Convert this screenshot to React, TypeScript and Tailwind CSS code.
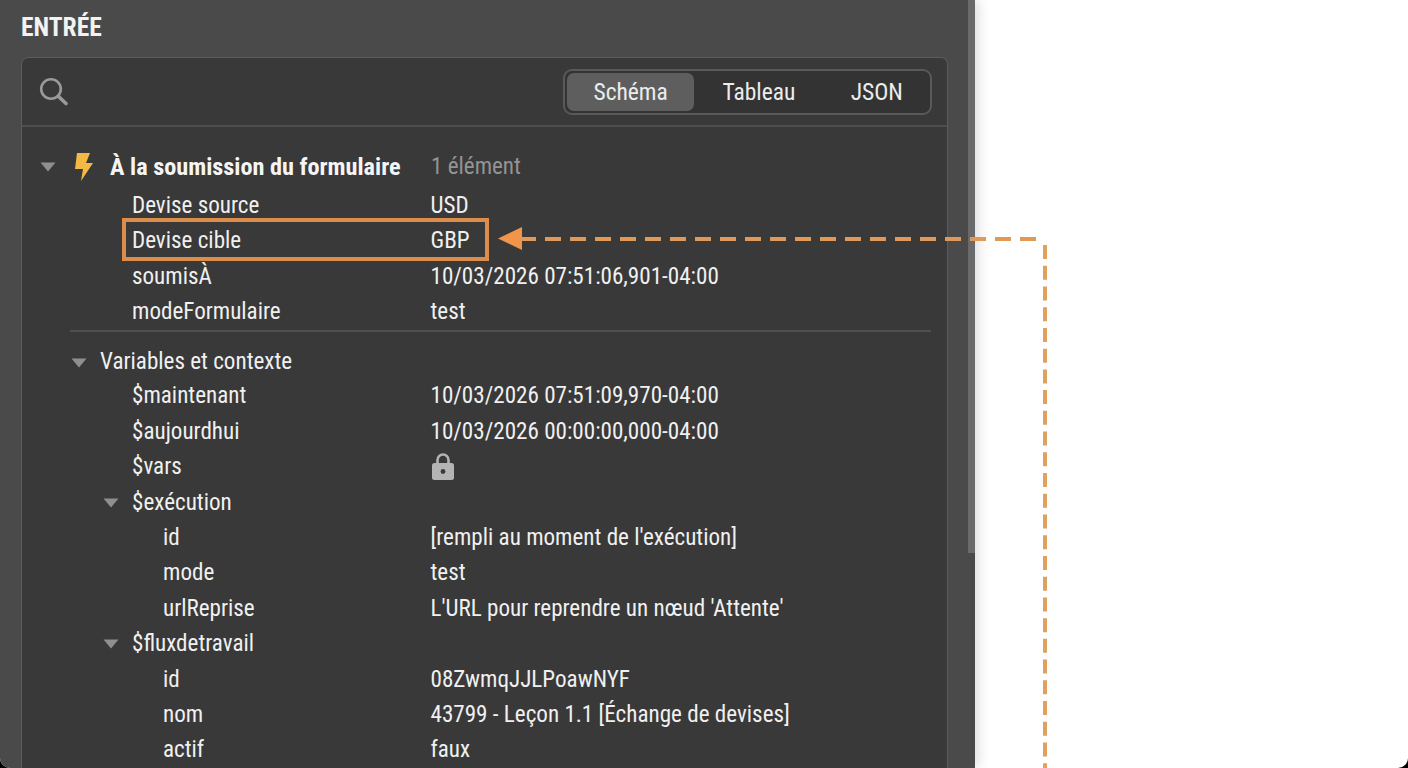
import React from "react";

const font = "[font-family:Roboto,'Liberation_Sans',sans-serif] [font-stretch:75%]";

function Tri() {
  return (
    <svg width="16" height="10" viewBox="0 0 16 10" className="shrink-0">
      <path d="M0.5 0.5H15.5L8 9.5Z" fill="#8f8f8f" />
    </svg>
  );
}

function Bolt() {
  return (
    <svg width="18" height="30" viewBox="0 0 18 30" className="shrink-0">
      <path d="M2 1H15L11 11H18L6 29L8 17H0Z" fill="#f4b844" />
    </svg>
  );
}

function Lock() {
  return (
    <svg width="24" height="28" viewBox="0 0 24 28" className="-mt-[3px]">
      <path d="M6.5 13V8a5.5 5.5 0 0 1 11 0v5" fill="none" stroke="#b4b4b4" strokeWidth="2.6" />
      <rect x="1" y="11" width="22" height="17" rx="2.5" fill="#b4b4b4" />
      <circle cx="12" cy="19.5" r="2.4" fill="#3a3a3a" />
    </svg>
  );
}

function SearchIcon() {
  return (
    <svg width="30" height="30" viewBox="0 0 30 30" fill="none" className="shrink-0">
      <circle cx="12" cy="12" r="9.8" stroke="#9a9a9a" strokeWidth="2.6" />
      <path d="M19.5 19.5L27 26.5" stroke="#9a9a9a" strokeWidth="3.6" strokeLinecap="round" />
    </svg>
  );
}

function Row({ label, value, highlight }: { label: string; value: React.ReactNode; highlight?: boolean }) {
  return (
    <div className="relative flex h-[35.4px] items-center text-[23.1px] text-[#f0f0f0]">
      {highlight && (
        <div className="absolute left-[100px] top-[-6px] h-[43px] w-[367px] border-4 border-[#dd8d4a]" />
      )}
      <div className="w-[408.5px] shrink-0 pl-[110px]">{label}</div>
      <div className="flex items-center">{value}</div>
    </div>
  );
}

function Nested({ label, value }: { label: string; value: string }) {
  return (
    <div className="flex h-[35.4px] items-center text-[23.1px] text-[#f0f0f0]">
      <div className="w-[408.5px] shrink-0 pl-[141px]">{label}</div>
      <div>{value}</div>
    </div>
  );
}

function Group({ label }: { label: string }) {
  return (
    <div className="flex h-[35.4px] items-center pl-[81px] text-[23.1px] text-[#f0f0f0]">
      <Tri />
      <span className="ml-[13px]">{label}</span>
    </div>
  );
}

export default function App() {
  return (
    <div className="h-[768px] w-[1408px] overflow-hidden bg-black">
      <div className={`relative h-[768px] w-[1408px] overflow-hidden rounded-b-[10px] bg-white ${font}`}>
        <div className="flex h-[768px] w-[975px] bg-[#4a4a4a] shadow-[3px_0_12px_rgba(0,0,0,0.14)]">
          <div className="flex w-[968px] shrink-0 flex-col pl-[21px] pr-[20px]">
            <div className="flex h-[57px] shrink-0 items-center pb-[2px] text-[25.5px] font-bold text-[#f2f2f2]">ENTRÉE</div>
            <div className="flex-1 rounded-t-[7px] border border-b-0 border-[#5c5c5c] bg-[#393939]">
              <div className="flex h-[69px] items-center justify-between border-b-2 border-[#4e4e4e] pl-[17px] pr-[15px]">
                <SearchIcon />
                <div className="flex h-[46px] w-[369px] items-center rounded-[9px] border-2 border-[#595959] bg-[#333333] p-[2px] text-[23.5px] text-[#ececec]">
                  <div className="flex h-[38px] w-[128px] items-center justify-center rounded-[7px] bg-[#5e5e5e] pt-[3px]">Schéma</div>
                  <div className="flex w-[128px] justify-center pl-[2px] pt-[3px]">Tableau</div>
                  <div className="flex w-[107px] justify-center pl-[4px] pt-[3px]">JSON</div>
                </div>
              </div>

              <div className="flex h-[61.5px] items-center pt-[19px]">
                <div className="w-[18px]" />
                <Tri />
                <div className="w-[19px]" />
                <Bolt />
                <div className="w-[17px]" />
                <span className="w-[321px] text-[24.25px] font-bold text-[#f5f5f5]">À la soumission du formulaire</span>
                <span className="text-[23.1px] text-[#949494]">1 élément</span>
              </div>

              <Row label="Devise source" value="USD" />
              <Row label="Devise cible" value="GBP" highlight />
              <Row label="soumisÀ" value="10/03/2026 07:51:06,901-04:00" />
              <Row label="modeFormulaire" value="test" />
              <div className="ml-[48px] mr-[16px] h-[2px] bg-[#4f4f4f]" />
              <div className="flex h-[47px] items-center pl-[49px] pt-[14px] text-[23.1px] text-[#f0f0f0]">
                <Tri />
                <span className="ml-[13px]">Variables et contexte</span>
              </div>
              <Row label="$maintenant" value="10/03/2026 07:51:09,970-04:00" />
              <Row label="$aujourdhui" value="10/03/2026 00:00:00,000-04:00" />
              <Row label="$vars" value={<Lock />} />
              <Group label="$exécution" />
              <Nested label="id" value="[rempli au moment de l'exécution]" />
              <Nested label="mode" value="test" />
              <Nested label="urlReprise" value="L'URL pour reprendre un nœud 'Attente'" />
              <Group label="$fluxdetravail" />
              <Nested label="id" value="08ZwmqJJLPoawNYF" />
              <Nested label="nom" value="43799 - Leçon 1.1 [Échange de devises]" />
              <Nested label="actif" value="faux" />
            </div>
          </div>
          <div className="h-[553px] w-[7px] bg-[#6a6a6a]" />
        </div>

        <svg className="absolute left-0 top-0" width="1408" height="768" viewBox="0 0 1408 768" fill="none">
          <path d="M498 238.5L522 227V250Z" fill="#f0954a" />
          <path d="M520 239H1045" stroke="#e0995a" strokeWidth="4" strokeDasharray="16 9" />
          <path d="M1045 245V768" stroke="#e0a05e" strokeWidth="4" strokeDasharray="14 6.73" />
        </svg>
      </div>
    </div>
  );
}
